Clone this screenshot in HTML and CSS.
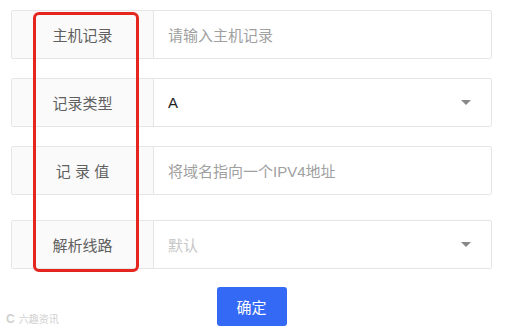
FILE: index.html
```html
<!DOCTYPE html>
<html lang="zh">
<head>
  <meta charset="UTF-8" />
  <title>添加记录</title>
  <link rel="stylesheet" href="styles.css">
</head>
<body>
  <div class="form">
    <div class="row">
      <div class="label">主机记录</div>
      <div class="field placeholder">请输入主机记录</div>
    </div>
    <div class="row">
      <div class="label">记录类型</div>
      <div class="field select value">A<span class="arrow"></span></div>
    </div>
    <div class="row">
      <div class="label">记 录 值</div>
      <div class="field placeholder">将域名指向一个IPV4地址</div>
    </div>
    <div class="row last">
      <div class="label">解析线路</div>
      <div class="field select muted">默认<span class="arrow"></span></div>
    </div>
    <div class="actions">
      <button>确定</button>
    </div>
    <!-- 标注框 -->
    <div class="highlight"></div>
  </div>
  <div class="watermark"><span class="logo">C</span>六趣资讯</div>
</body>
</html>
```
FILE: styles.css
```css
* {
  box-sizing: border-box;
  font-family: "Liberation Sans", "Noto Sans CJK SC", sans-serif;
}

body {
  margin: 0;
  background: #fff;
  width: 505px;
  height: 335px;
  position: relative;
  overflow: hidden;
}

.form {
  position: relative;
  padding: 10px 13px 0 11px;
}

.row {
  display: flex;
  height: 49px;
  border: 1px solid #e6e6e6;
  border-radius: 2px;
  margin-bottom: 19px;
}

.row.last {
  margin-top: 25px;
  margin-bottom: 0;
}

.label {
  width: 142px;
  flex: none;
  background: #fafafa;
  border-right: 1px solid #e6e6e6;
  display: flex;
  align-items: center;
  justify-content: center;
  color: #606060;
  font-size: 15px;
}

.field {
  flex: 1;
  display: flex;
  align-items: center;
  padding-left: 14px;
  font-size: 15px;
  position: relative;
}

.placeholder {
  color: #a0a0a0;
}

.value {
  color: #222;
}

.muted {
  color: #c6c6c6;
}

.arrow {
  position: absolute;
  right: 20px;
  top: 21px;
  border-left: 5px solid transparent;
  border-right: 5px solid transparent;
  border-top: 5px solid #888;
}

.actions {
  display: flex;
  justify-content: center;
  padding-top: 18px;
}

button {
  width: 70px;
  height: 39px;
  border: none;
  border-radius: 3px;
  background: #3369f5;
  color: #fff;
  font-size: 15px;
}

.highlight {
  position: absolute;
  left: 33px;
  top: 12px;
  width: 106px;
  height: 260px;
  border: 3px solid #e5261f;
  border-radius: 6px;
}

.watermark {
  position: absolute;
  left: 6px;
  top: 311px;
  font-size: 10px;
  color: #d0d0d0;
  display: flex;
  align-items: center;
  gap: 4px;
}

.logo {
  font-size: 12px;
  font-weight: bold;
}
```
